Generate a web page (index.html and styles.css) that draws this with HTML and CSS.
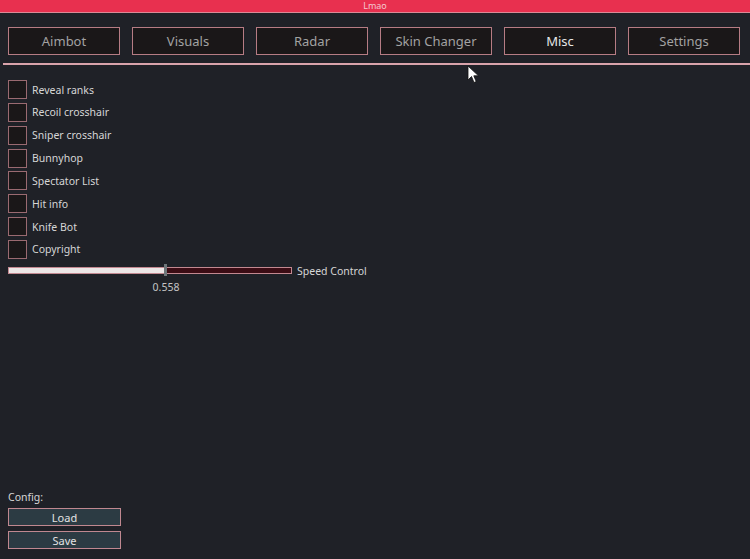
FILE: index.html
```html
<!DOCTYPE html>
<html>
	<head>
		<title>Lmao</title>
		<link rel="stylesheet" href="styles.css">
	</head>
	<body>
		<div class="titlebar">Lmao</div>
		<div class="window">
			<div class="tabs">
				<button class="tab">Aimbot</button>
				<button class="tab">Visuals</button>
				<button class="tab">Radar</button>
				<button class="tab">Skin Changer</button>
				<button class="tab active">Misc</button>
				<button class="tab">Settings</button>
			</div>
			<div class="separator"></div>

			<div class="options">
				<label class="option"><span class="box"></span>Reveal ranks</label>
				<label class="option"><span class="box"></span>Recoil crosshair</label>
				<label class="option"><span class="box"></span>Sniper crosshair</label>
				<label class="option"><span class="box"></span>Bunnyhop</label>
				<label class="option"><span class="box"></span>Spectator List</label>
				<label class="option"><span class="box"></span>Hit info</label>
				<label class="option"><span class="box"></span>Knife Bot</label>
				<label class="option"><span class="box"></span>Copyright</label>
			</div>

			<div class="slider-row">
				<div class="slider">
					<div class="fill" style="width: 55.8%"></div>
					<div class="grab" style="left: 55.8%"></div>
				</div>
				<span class="slider-label">Speed Control</span>
			</div>
			<div class="slider-value">0.558</div>

			<div class="config">
				<div class="config-title">Config:</div>
				<button class="cfg-btn">Load</button>
				<button class="cfg-btn">Save</button>
			</div>
		</div>

		<!-- mouse pointer -->
		<svg class="pointer" width="13" height="19" viewBox="0 0 13 19">
			<path d="M1 1 L1 15 L4.5 11.5 L7 17.5 L9.2 16.6 L6.8 10.8 L11.5 10.8 Z" fill="#ffffff" stroke="#111" stroke-width="0.8"/>
		</svg>
	</body>
</html>
```

FILE: styles.css
```css
html, body {
	margin: 0;
	height: 100%;
}

body {
	background-color: #1f2127;
	font-family: "Noto Sans", "DejaVu Sans", sans-serif;
	color: #d6d6d6;
	overflow: hidden;
	display: flex;
	flex-direction: column;
}

.titlebar {
	height: 12px;
	line-height: 11px;
	font-size: 9px;
	text-align: center;
	color: #f4c8cf;
	background-color: #e8304f;
	border-bottom: 1px solid #d98a96;
	overflow: visible;
}

.window {
	flex: 1;
	display: flex;
	flex-direction: column;
	padding: 0 0 10px 8px;
}

.tabs {
	display: flex;
	gap: 12px;
	margin-top: 14px;
}

.tab {
	width: 112px;
	height: 28px;
	box-sizing: border-box;
	background-color: #1a1718;
	border: 1px solid #b67c84;
	color: #a2a2a2;
	font-family: inherit;
	font-size: 13px;
	padding: 0;
}

.tab.active {
	color: #e6e6e6;
}

.separator {
	height: 2px;
	background-color: #d9a3ab;
	margin: 8px 0 0 -5px;
}

.options {
	display: flex;
	flex-direction: column;
	gap: 3.85px;
	margin-top: 15px;
}

.option {
	display: flex;
	align-items: center;
	height: 19px;
	font-size: 10.5px;
}

.box {
	width: 19px;
	height: 19px;
	box-sizing: border-box;
	border: 1px solid #9a6a71;
	background-color: #1a1718;
	margin-right: 5px;
}

.slider-row {
	display: flex;
	align-items: center;
	margin-top: 5px;
	height: 14px;
}

.slider {
	position: relative;
	width: 284px;
	height: 7px;
	box-sizing: border-box;
	border: 1px solid #c28890;
	background-color: #3b0c14;
}

.fill {
	height: 100%;
	background-color: #ece6e6;
}

.grab {
	position: absolute;
	top: -4px;
	width: 3px;
	height: 12px;
	margin-left: -2px;
	background-color: #6e767a;
}

.slider-label {
	font-size: 10.5px;
	margin-left: 5px;
}

.slider-value {
	width: 316px;
	text-align: center;
	font-size: 10.5px;
	color: #c4c4c4;
	margin-top: 2px;
}

.config {
	margin-top: auto;
	display: flex;
	flex-direction: column;
	gap: 5px;
}

.config-title {
	font-size: 10.5px;
	margin-bottom: -1px;
}

.cfg-btn {
	width: 113px;
	height: 18px;
	box-sizing: border-box;
	padding: 0;
	background-color: #2c3b43;
	border: 1px solid #c08890;
	color: #e2e2e2;
	font-family: inherit;
	font-size: 11px;
}

.pointer {
	position: absolute;
	left: 467px;
	top: 65px;
}
```
